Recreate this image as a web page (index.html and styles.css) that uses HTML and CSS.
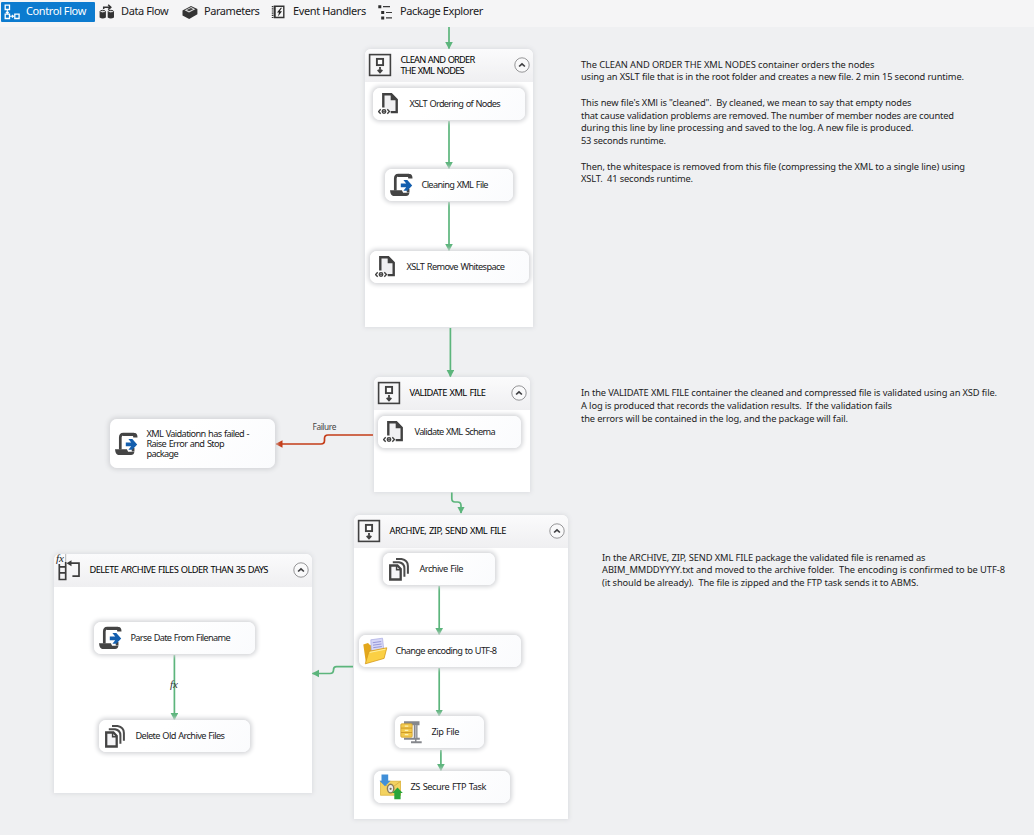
FILE: index.html
```html
<!DOCTYPE html>
<html lang="en">
<head>
<meta charset="utf-8">
<title>Package Designer</title>
<link rel="stylesheet" href="styles.css">
</head>
<body>
<svg class="sprite" aria-hidden="true">
  <symbol id="i-seq" viewBox="0 0 24 24">
    <rect x="1.6" y="1.6" width="20.8" height="20.8" fill="#f7f7f8" stroke="#414141" stroke-width="1.6"/>
    <rect x="8.9" y="5.9" width="6.2" height="6.2" fill="#fff" stroke="#414141" stroke-width="1.9"/>
    <path d="M12 14V19M9.700 16.800l2.300 2.500 2.300-2.500" fill="none" stroke="#414141" stroke-width="1.8"/>
  </symbol>
  <symbol id="i-loop" viewBox="0 0 26 28">
    <path d="M4.3 10v15.500h6.4V8M4.3 12.900h6.400M4.3 18.800h6.400M14 9.200h10v13h-6.600" fill="none" stroke="#3c3c3c" stroke-width="1.7"/>
    <path d="M16.500 6.200v6l-5-3z" fill="#3c3c3c"/>
    <path d="M10.700 0v8" stroke="#888" stroke-width=".6"/>
  </symbol>
  <symbol id="i-xml" viewBox="0 0 24 24">
    <path d="M5.300 15.500V2.300h8l5.400 5.400v12.400h-6" fill="#f0f0f2" stroke="#414141" stroke-width="2.4"/>
    <path d="M12.700 1.500v6.800h6.700z" fill="#414141"/>
    <path d="M2.700 17.300.600 19.600l2.100 2.200M9.300 17.300l2.100 2.300-2.100 2.200" fill="none" stroke="#414141" stroke-width="1.4"/>
    <circle cx="6" cy="19.500" r="1.800" fill="#ccc" stroke="#414141" stroke-width="1.3"/>
    <path d="M4.500 19.300h3" stroke="#414141" stroke-width="1"/>
  </symbol>
  <symbol id="i-script" viewBox="0 0 24 24">
    <path d="M5.300 17.500V5.600q0-3.400 3-3.400h10.800M18.100 16v3.500" fill="none" stroke="#444" stroke-width="2.700"/>
    <path d="M8.200 .9h12q2.300.6 2.300 4.700h-4.200l-.3-1.600H8z" fill="#444"/>
    <path d="M0 17.200h11.900l1.200 2.500h6.300q-.5 3.200-3.300 3.200H3.400Q.6 22.900 0 17.200z" fill="#444"/>
    <path d="M10.800 10.600h5.400l-2.800-3.500h3.900l4.900 5.300-4.900 5.300h-3.900l2.800-3.500h-5.400z" fill="#145fae"/>
  </symbol>
  <symbol id="i-files" viewBox="0 0 24 24">
    <path d="M2.200 8.500h7.200l3.300 3.400v10.600H2.200z" fill="#f5f5f7" stroke="#444" stroke-width="2.300"/>
    <path d="M8.600 8.500v4.200h4.400" fill="none" stroke="#444" stroke-width="1.500"/>
    <path d="M4.800 5.200h6.200q5.400 1 5.400 6v8.600M8 2h5.500q6.400 1.200 6.400 7v7.800" fill="none" stroke="#4c4c4c" stroke-width="2"/>
  </symbol>
  <symbol id="i-folder" viewBox="0 0 26 28">
    <path d="M1.300 7.500 6 5.900l2.200 2.400L19 6.500l1.400 13L4 26.600z" fill="#e3a71c"/>
    <path d="m8.800 2.800 11.700-1.600 1.500 13.500L9.500 18z" fill="#d6d7f7" stroke="#a9abe2" stroke-width=".7"/>
    <path d="m10.700 5.700 8.500-1.200M11 8.200l8.500-1.200M11.200 10.700l8.600-1.200" stroke="#8587d0" stroke-width=".8"/>
    <path d="m7 14.300 17.800-3.500-2.700 10.600L3.300 26.800z" fill="#fbd044" stroke="#d79a1b" stroke-width=".8"/>
    <path d="M7.800 15.400 23.500 12.200" stroke="#fff0a0" stroke-width="1"/>
  </symbol>
  <symbol id="i-zip" viewBox="0 0 24 24">
    <path d="M4 1.200h15.500v4h-2v12.500h2.300v2h-3.300v1.500h5.200v2H11v-2h4v-1.500H4v-2h9.800V5.200H4z" fill="#85878c"/>
    <rect x=".8" y="3.800" width="11.400" height="13.400" rx="1" fill="#f2c94c" stroke="#cf9f30" stroke-width=".8"/>
    <path d="M1 8.100h11M1 12.500h11" stroke="#c99424" stroke-width=".9"/>
    <path d="M4.800 6.200h3.500M4.800 10.400h3.500M4.800 14.700h3.500" stroke="#fff2b5" stroke-width="1.2"/>
    <path d="M15.800 5v13" stroke="#c7c8cc" stroke-width="1"/>
  </symbol>
  <symbol id="i-ftp" viewBox="0 0 24 26">
    <rect x="1.600" y="7.200" width="20" height="14" fill="#f3d260" stroke="#ddb33d" stroke-width=".8"/>
    <path d="m2 7.600 9.600 7 9.600-7" fill="none" stroke="#d9b245"/>
    <ellipse cx="11.600" cy="14.600" rx="3.200" ry="4.300" fill="#ececec" stroke="#8a7a55" stroke-width="1.4"/>
    <circle cx="11.600" cy="14.800" r="1.100" fill="#776c50"/>
    <path d="M2.500 .5h6.700v6.300h2.300L6 12.200.5 6.800h2z" fill="#408fd8"/>
    <path d="M15.300 25.300h6.300v-6.200h2.200l-5.300-5.600-5.300 5.600h2.100z" fill="#27a53a"/>
  </symbol>
  <symbol id="i-chevron" viewBox="0 0 16 16">
    <circle cx="8" cy="8" r="7.200" fill="#f9f9fa" stroke="#8a8a8c" stroke-width=".9"/>
    <path d="M5.100 9.500 8 6.800l2.900 2.700" fill="none" stroke="#3f3f42" stroke-width="1.700"/>
  </symbol>
</svg>

<nav class="tabs">
  <a class="tab tab-active">
    <svg class="tab-icon" viewBox="0 0 16 16"><path d="M1.200 1.200h4.300v4.300H1.200zM1.200 10.200h4.300v4.300H1.200zM10.800 10.200h4.300v4.300h-4.300z" fill="none" stroke="#fff" stroke-width="1.300"/><path d="M3.300 6v3.300M1.900 8l1.400 1.500L4.700 8M6 12.300h3.600M8 11l1.500 1.300L8 13.600" fill="none" stroke="#fff" stroke-width="1.100"/></svg>
    <span data-width="60.500">Control Flow</span>
  </a>
  <a class="tab tab-data">
    <svg class="tab-icon" viewBox="0 0 16 16"><path d="M.6 8v5.600q3 1.800 6.300 0V8zM8.700 8v5.600q3 1.800 6.300 0V8z" fill="#333"/><ellipse cx="3.750" cy="7.600" rx="2.700" ry="1.300" fill="#ddd" stroke="#333"/><ellipse cx="11.850" cy="7.600" rx="2.700" ry="1.300" fill="#ddd" stroke="#333"/><path d="M4.700 5V3.200H11M9.200.8l2.600 2.400-2.600 2.400" fill="none" stroke="#333" stroke-width="1.500"/></svg>
    <span data-width="48">Data Flow</span>
  </a>
  <a class="tab tab-params">
    <svg class="tab-icon" viewBox="0 0 16 16"><path d="M.5 6.500 9 2l6.400 2.900v5.400L7.200 15 .5 11.400z" fill="#333"/><path d="M2.600 6.300 9.100 3.100l4.200 2.100L7 8.500z" fill="#dcdcdc"/><path d="M4.700 6 9 4l2.200 1.200L7 7.300z" fill="#444"/></svg>
    <span data-width="56">Parameters</span>
  </a>
  <a class="tab tab-events">
    <svg class="tab-icon" viewBox="0 0 16 16"><path d="M3.400 2.200h9.400v11.300H3.400z" fill="#f5f5f5" stroke="#333" stroke-width="1.400"/><path d="M1.600 2v12" stroke="#333" stroke-width="1.600" stroke-dasharray="1.200 1"/><path d="M4 2v11.600" stroke="#333" stroke-width="1.400"/><path d="M9.800 3.800 6 8.500h2l-1 3.900L11 7.300H8.700l2.300-3.500z" fill="#222"/></svg>
    <span data-width="73.500">Event Handlers</span>
  </a>
  <a class="tab tab-explorer">
    <svg class="tab-icon" viewBox="0 0 16 16"><path d="M.3 1.200h3v3h-3zM3.200 7h3v3h-3zM3.200 12.400h3v3h-3z" fill="#2d2d2d"/><path d="M5 2.700h7M8 8.500h6M8 13.900h6" stroke="#3a3a3a" stroke-width="1.200"/></svg>
    <span data-width="83.500">Package Explorer</span>
  </a>
</nav>

<main class="board">
  <section class="container c-clean">
    <header><svg class="head-icon"><use href="#i-seq"/></svg><h2><span data-width="74.500">CLEAN AND ORDER</span><span data-width="64">THE XML NODES</span></h2><svg class="toggle"><use href="#i-chevron"/></svg></header>
  </section>
  <section class="container c-validate">
    <header><svg class="head-icon"><use href="#i-seq"/></svg><h2><span data-width="76.500">VALIDATE XML FILE</span></h2><svg class="toggle"><use href="#i-chevron"/></svg></header>
  </section>
  <section class="container c-archive">
    <header><svg class="head-icon"><use href="#i-seq"/></svg><h2><span data-width="117">ARCHIVE, ZIP, SEND XML FILE</span></h2><svg class="toggle"><use href="#i-chevron"/></svg></header>
  </section>
  <section class="container c-delete">
    <header><svg class="loop-icon"><use href="#i-loop"/></svg><i class="fx fx-head">fx</i><h2><span data-width="179">DELETE ARCHIVE FILES OLDER THAN 35 DAYS</span></h2><svg class="toggle"><use href="#i-chevron"/></svg></header>
  </section>

  <svg class="wires" viewBox="0 27 1034 808">
    <defs>
      <marker id="ok" markerUnits="userSpaceOnUse" markerWidth="9" markerHeight="9" refX="6.500" refY="4" orient="auto"><path d="M0 .2l7.200 3.800L0 7.800z" fill="#5cb57c"/></marker>
      <marker id="bad" markerUnits="userSpaceOnUse" markerWidth="9" markerHeight="9" refX="6.500" refY="4" orient="auto"><path d="M0 .2l7.200 3.800L0 7.800z" fill="#c43c18"/></marker>
    </defs>
    <g class="wire-ok" marker-end="url(#ok)">
      <path d="M449 27V48.500"/>
      <path d="M449 121V168.500"/>
      <path d="M449 202V250.500"/>
      <path d="M450.400 328V376.500"/>
      <path d="M451.800 492.500V498.500Q451.800 502 455 502H457.500Q461 502 461 505.500V513"/>
      <path d="M439.200 586V634.500"/>
      <path d="M439.200 668V716"/>
      <path d="M440.900 750V770.500"/>
      <path d="M174.400 655V719.500"/>
      <path d="M353 666.700H336.500Q333.500 666.700 333.500 670T330 673.500H312.500"/>
    </g>
    <path class="wire-bad" marker-end="url(#bad)" d="M373 435H328Q324.500 435 324.500 438.500V440.500Q324.500 444 321 444H276"/>
  </svg>

  <div class="node n-order"><svg class="icon"><use href="#i-xml"/></svg><p><span data-width="91">XSLT Ordering of Nodes</span></p></div>
  <div class="node n-cleaning"><svg class="icon"><use href="#i-script"/></svg><p><span data-width="67">Cleaning XML File</span></p></div>
  <div class="node n-remove"><svg class="icon"><use href="#i-xml"/></svg><p><span data-width="98.500">XSLT Remove Whitespace</span></p></div>
  <div class="node n-schema"><svg class="icon"><use href="#i-xml"/></svg><p><span data-width="81">Validate XML Schema</span></p></div>
  <div class="node n-failed"><svg class="icon"><use href="#i-script"/></svg><p><span data-width="103">XML Vaidationn has failed -</span><span data-width="78">Raise Error and Stop</span><span data-width="32">package</span></p></div>
  <div class="node n-files"><svg class="icon"><use href="#i-files"/></svg><p><span data-width="44">Archive File</span></p></div>
  <div class="node n-encoding"><svg class="icon icon-folder"><use href="#i-folder"/></svg><p><span data-width="101.500">Change encoding to UTF-8</span></p></div>
  <div class="node n-zip"><svg class="icon"><use href="#i-zip"/></svg><p><span data-width="28">Zip File</span></p></div>
  <div class="node n-ftp"><svg class="icon icon-ftp"><use href="#i-ftp"/></svg><p><span data-width="76">ZS Secure FTP Task</span></p></div>
  <div class="node n-parse"><svg class="icon"><use href="#i-script"/></svg><p><span data-width="100">Parse Date From Filename</span></p></div>
  <div class="node n-old"><svg class="icon"><use href="#i-files"/></svg><p><span data-width="89.500">Delete Old Archive Files</span></p></div>

  <span class="wire-label" data-width="24">Failure</span>
  <i class="fx fx-wire">fx</i>

  <div class="note note-clean"><span data-width="294">The CLEAN AND ORDER THE XML NODES container orders the nodes</span><span data-width="383.500">using an XSLT file that is in the root folder and creates a new file. 2 min 15 second runtime.</span><br><span data-width="331">This new file's XMl is "cleaned".  By cleaned, we mean to say that empty nodes</span><span data-width="373.500">that cause validation problems are removed. The number of member nodes are counted</span><span data-width="333">during this line by line processing and saved to the log. A new file is produced.</span><span data-width="85.500">53 seconds runtime.</span><br><span data-width="384.500">Then, the whitespace is removed from this file (compressing the XML to a single line) using</span><span data-width="112.500">XSLT.  41 seconds runtime.</span></div>
  <div class="note note-validate"><span data-width="416.500">In the VALIDATE XML FILE container the cleaned and compressed file is validated using an XSD file.</span><span data-width="311.500">A log is produced that records the validation results.  If the validation fails</span><span data-width="267.500">the errors will be contained in the log, and the package will fail.</span></div>
  <div class="note note-archive"><span data-width="324">In the ARCHIVE, ZIP, SEND XML FILE package the validated file is renamed as</span><span data-width="403.500">ABIM_MMDDYYYY.txt and moved to the archive folder.  The encoding is confirmed to be UTF-8</span><span data-width="317">(it should be already).  The file is zipped and the FTP task sends it to ABMS.</span></div>
</main>
<script src="fit.js"></script>
</body>
</html>
```
FILE: styles.css
```css
* { box-sizing: border-box; }

body {
  margin: 0;
  width: 1034px;
  height: 835px;
  overflow: hidden;
  display: flex;
  flex-direction: column;
  background: #eff0f2;
  color: #1b1b1d;
  font-family: "Noto Sans", "Open Sans", sans-serif;
}

.sprite { position: absolute; width: 0; height: 0; }
[data-width] { display: block; width: max-content; white-space: pre; }

/* Designer tabs */
.tabs {
  flex: 0 0 27px;
  display: flex;
  align-items: flex-start;
  padding: 2px 0 0 1px;
  background: #f5f5f6;
  font-size: 11px;
}
.tab { display: flex; align-items: center; height: 20px; padding-left: 3px; }
.tab span { line-height: 18px; margin-top: -2px; }
.tab-icon { width: 16px; height: 16px; flex: none; margin-right: 6px; }
.tab-active { width: 94px; background: #0c7bcf; color: #fff; border-radius: 1px; }
.tab-data { width: 85px; padding-left: 4px; }
.tab-params { width: 91px; padding-left: 2px; }
.tab-events { width: 107px; padding-left: 0; }
.tab-explorer { padding-left: 0; }

/* Design surface */
.board { position: relative; flex: 1; }
.wires { position: absolute; left: 0; top: 0; width: 1034px; height: 808px; }
.wire-ok { fill: none; stroke: #5cb57c; stroke-width: 1.7; }
.wire-bad { fill: none; stroke: #c43c18; stroke-width: 1.7; }

.container {
  position: absolute;
  background: #fff;
  border-radius: 6px 6px 0 0;
  box-shadow: 0 0 4px 1px #dcdde0;
}
.container header {
  position: relative;
  height: 33px;
  display: flex;
  align-items: center;
  padding: 0 3px 2px 4px;
  background: linear-gradient(#fbfbfc, #efeff1);
  border-radius: 6px 6px 0 0;
}
.head-icon { width: 24px; height: 24px; flex: none; margin-left: -1px; }
.loop-icon { width: 26px; height: 28px; flex: none; margin: -3px 0 0 -3px; }
.container h2 {
  flex: 1;
  margin: 0 0 0 8.5px;
  font-size: 9.3px;
  line-height: 11px;
  font-weight: 400;
  color: #000;
  word-spacing: 0.8px;
}
.toggle { width: 16px; height: 16px; flex: none; }

.c-clean { left: 365px; top: 22px; width: 168px; height: 278px; }
.c-validate { left: 374px; top: 350px; width: 156px; height: 115px; }
.c-archive { left: 354px; top: 488px; width: 214px; height: 304px; }
.c-delete { left: 54px; top: 527px; width: 258px; height: 239px; }

.node {
  position: absolute;
  height: 32px;
  display: flex;
  align-items: center;
  padding-left: 5px;
  border-radius: 7px;
  background: linear-gradient(135deg, #fff 40%, #fafbfd);
  box-shadow: 0 0 4px 1.5px #d6d7da;
  font-size: 9.2px;
  line-height: 10px;
  word-spacing: 0.8px;
}
.node p { margin: 0 0 0 7.5px; }
.icon { width: 24px; height: 24px; flex: none; }
.icon-folder { width: 26px; height: 28px; margin: 0 0 0 -2px; }
.icon-ftp { height: 26px; }

.n-order { left: 373px; top: 61px; width: 152px; }
.n-cleaning { left: 385px; top: 142px; width: 128px; }
.n-remove { left: 370px; top: 224px; width: 159px; }
.n-schema { left: 378px; top: 389px; width: 143px; }
.n-failed { left: 110px; top: 392px; width: 165px; height: 49px; }
.n-files { left: 383px; top: 526px; width: 112px; }
.n-encoding { left: 359px; top: 608px; width: 162px; }
.n-zip { left: 395px; top: 689px; width: 89px; }
.n-ftp { left: 374px; top: 744px; width: 136px; }
.n-parse { left: 94px; top: 595px; width: 161px; }
.n-old { left: 99px; top: 693px; width: 151px; }

.wire-label {
  position: absolute;
  left: 312.5px;
  top: 395px;
  font-size: 8.3px;
  line-height: 10px;
  color: #444;
}
.fx { position: absolute; font-family: "Liberation Serif", serif; }
.fx-head { left: 2px; top: -2px; font-size: 11px; line-height: 12px; }
.fx-wire { left: 170px; top: 651px; font-size: 11px; line-height: 12px; color: #333; }

.note { position: absolute; font-size: 9.3px; line-height: 12.75px; color: #222; }
.note-clean { left: 581px; top: 31.7px; }
.note-validate { left: 581px; top: 360px; }
.note-archive { left: 602px; top: 524.5px; }
```
FILE: fit.js
```js
// Spread each label's letters so the line takes its declared width.
document.querySelectorAll("[data-width]").forEach((el) => {
  const natural = el.getBoundingClientRect().width;
  const extra = Number(el.dataset.width) - 0.6 - natural;
  el.style.letterSpacing = extra / el.textContent.length + "px";
});
```
